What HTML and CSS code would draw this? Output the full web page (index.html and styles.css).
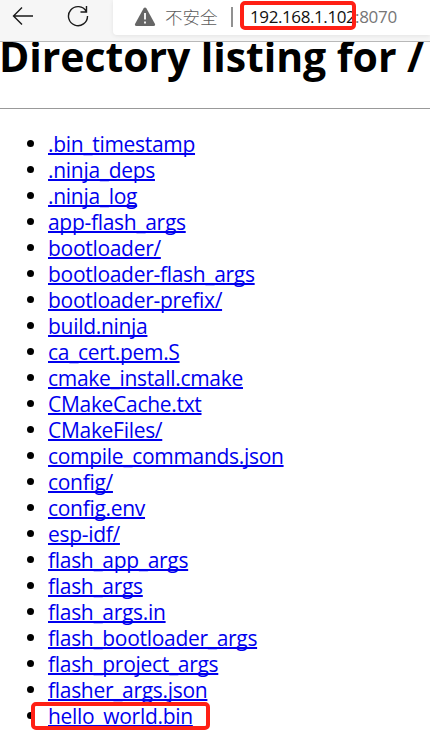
FILE: index.html
```
<!DOCTYPE html>
<html lang="zh">

<head>
    <meta charset="UTF-8">
    <title>Directory listing for /</title>
    <link rel="stylesheet" href="styles.css">
</head>

<body>
    <div class="toolbar">
        <svg class="back" width="22" height="20" viewBox="0 0 22 20">
            <path d="M21 10H1.500M10 1.500L1.500 10l8.500 8.500" />
        </svg>
        <svg class="reload" width="22" height="22" viewBox="0 0 22 22">
            <path d="M19.300 6.500A9.500 9.500 0 1 0 20.500 11M19.500 1v6h-6" />
        </svg>
        <div class="address">
            <svg class="warning" width="22" height="20" viewBox="0 0 22 20">
                <path d="M9.500 1.500Q11 -0.500 12.500 1.500L21 17Q21.500 19 19.500 19H2.500Q0.500 19 1 17Z" fill="#666" />
                <path d="M11 6v6.500M11 14.500v2" stroke="#fff" stroke-width="1.800" />
            </svg>
            <span class="unsafe">不安全</span>
            <span class="divider"></span>
            <span class="host">192.168.1.102</span><span class="port">:8070</span>
            <div class="mark mark-host"></div>
        </div>
    </div>
    <div class="page">
        <h1>Directory listing for /</h1>
        <hr>
        <ul>
            <li><a href="#">.bin_timestamp</a></li>
            <li><a href="#">.ninja_deps</a></li>
            <li><a href="#">.ninja_log</a></li>
            <li><a href="#">app-flash_args</a></li>
            <li><a href="#">bootloader/</a></li>
            <li><a href="#">bootloader-flash_args</a></li>
            <li><a href="#">bootloader-prefix/</a></li>
            <li><a href="#">build.ninja</a></li>
            <li><a href="#">ca_cert.pem.S</a></li>
            <li><a href="#">cmake_install.cmake</a></li>
            <li><a href="#">CMakeCache.txt</a></li>
            <li><a href="#">CMakeFiles/</a></li>
            <li><a href="#">compile_commands.json</a></li>
            <li><a href="#">config/</a></li>
            <li><a href="#">config.env</a></li>
            <li><a href="#">esp-idf/</a></li>
            <li><a href="#">flash_app_args</a></li>
            <li><a href="#">flash_args</a></li>
            <li><a href="#">flash_args.in</a></li>
            <li><a href="#">flash_bootloader_args</a></li>
            <li><a href="#">flash_project_args</a></li>
            <li><a href="#">flasher_args.json</a></li>
            <li><a href="#">hello_world.bin</a><div class="mark mark-file"></div></li>
        </ul>
    </div>
</body>

</html>
```
FILE: styles.css
```
body,
html {
    margin: 0;
    height: 731px;
    overflow: hidden;
    background: #fff;
    font-family: "Open Sans", "Noto Sans CJK SC", sans-serif;
}

.toolbar {
    display: flex;
    align-items: flex-start;
    box-sizing: border-box;
    height: 42px;
    background: #f6f6f6;
    border-bottom: 1px solid #b8b8b8;
}

.back,
.reload {
    flex: none;
    fill: none;
    stroke: #1a1a1a;
    stroke-width: 1.4;
}

.back {
    margin: 6px 0 0 12px;
}

.reload {
    margin: 5px 0 0 33px;
}

.address {
    position: relative;
    display: flex;
    flex: 1;
    align-items: center;
    height: 35px;
    margin-left: 24px;
    padding-bottom: 2px;
    box-sizing: border-box;
    border-radius: 0 0 0 4px;
    background: #fff;
    box-shadow: 0 1px 4px rgba(0, 0, 0, 0.08);
    font-size: 17px;
    white-space: nowrap;
}

.warning {
    flex: none;
    margin-left: 21px;
}

.unsafe {
    width: 54px;
    margin-left: 9px;
    color: #5c5c5c;
    font-family: "Noto Sans CJK SC", sans-serif;
    font-size: 17.5px;
    font-weight: 300;
    line-height: 22px;
}

.divider {
    width: 2px;
    height: 20px;
    margin: 0 17px 0 12px;
    background: #919191;
}

.host {
    width: 105px;
    color: #111;
    letter-spacing: -0.4px;
}

.port {
    color: #767676;
    letter-spacing: -0.3px;
}

.mark {
    position: absolute;
    box-sizing: border-box;
    border: 4px solid #ff2015;
    border-radius: 5px;
}

.mark-host {
    left: 127px;
    top: 1px;
    width: 116px;
    height: 29px;
}

.page {
    height: 689px;
    overflow: hidden;
}

h1 {
    height: 56px;
    margin: -14px 0 0 -1px;
    font-size: 41px;
    line-height: 56px;
    letter-spacing: -0.07px;
    white-space: nowrap;
}

hr {
    height: 1px;
    margin: 24px 0 22px;
    border: 0;
    background: #999;
}

ul {
    margin: 0;
    padding-left: 48px;
    list-style: none;
}

li {
    position: relative;
    height: 26px;
    font-size: 21px;
    line-height: 26px;
    letter-spacing: -0.3px;
    white-space: nowrap;
}

li::before {
    content: "";
    position: absolute;
    left: -21px;
    top: 9px;
    width: 7px;
    height: 7px;
    border-radius: 50%;
    background: #000;
}

a {
    color: #0000ee;
    text-decoration: underline;
    text-decoration-thickness: 2px;
    text-decoration-skip-ink: none;
    text-underline-offset: 1px;
}

.mark-file {
    left: -17px;
    top: -1px;
    width: 179px;
    height: 28px;
}
```
